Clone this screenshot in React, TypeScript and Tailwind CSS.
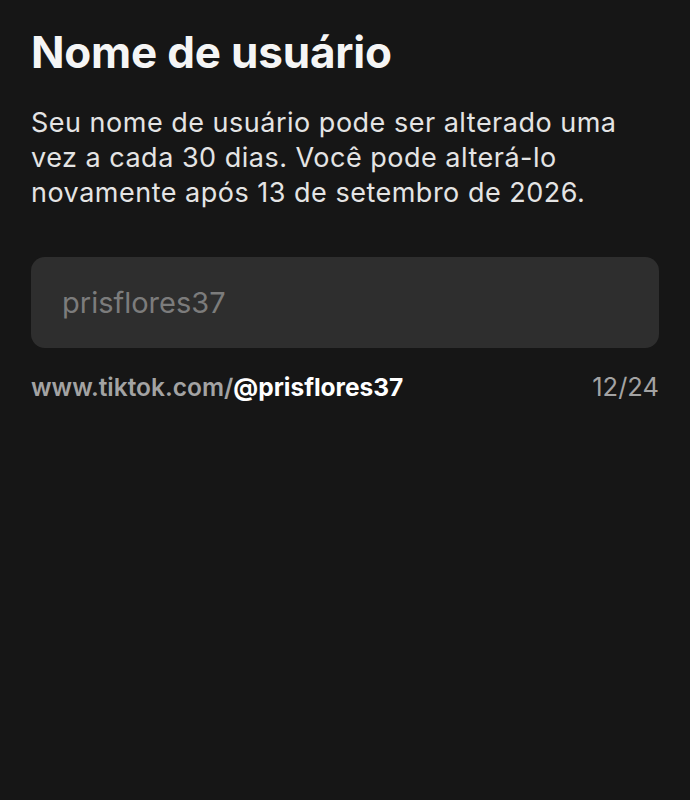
export default function App() {
  return (
    <div
      className="min-h-[800px] w-full bg-[#161616] px-[31px] pt-[26px] text-white"
      style={{ fontFamily: 'Inter, "Noto Sans", sans-serif' }}
    >
      <h1 className="text-[44px] font-bold leading-[52px] tracking-[-0.2px] text-[#f5f5f5]">Nome de usuário</h1>
      <p className="mt-[27px] text-[27px] leading-[35px] tracking-[0.5px] text-[#e4e4e4]">
        Seu nome de usuário pode ser alterado uma
        <br />
        vez a cada 30 dias. Você pode alterá-lo
        <br />
        novamente após 13 de setembro de 2026.
      </p>
      <div className="mt-[47px] flex h-[91px] items-center rounded-[14px] bg-[#2e2e2e] px-[31px]">
        <span className="text-[29px] text-[#7c7c7c]">prisflores37</span>
      </div>
      <div className="mt-[24px] flex items-center justify-between text-[24.5px] leading-[30px]">
        <span className="font-semibold text-[#a3a3a3]">
          www.tiktok.com/<span className="font-bold text-white">@prisflores37</span>
        </span>
        <span className="text-[25.5px] text-[#a3a3a3]">12/24</span>
      </div>
    </div>
  )
}
